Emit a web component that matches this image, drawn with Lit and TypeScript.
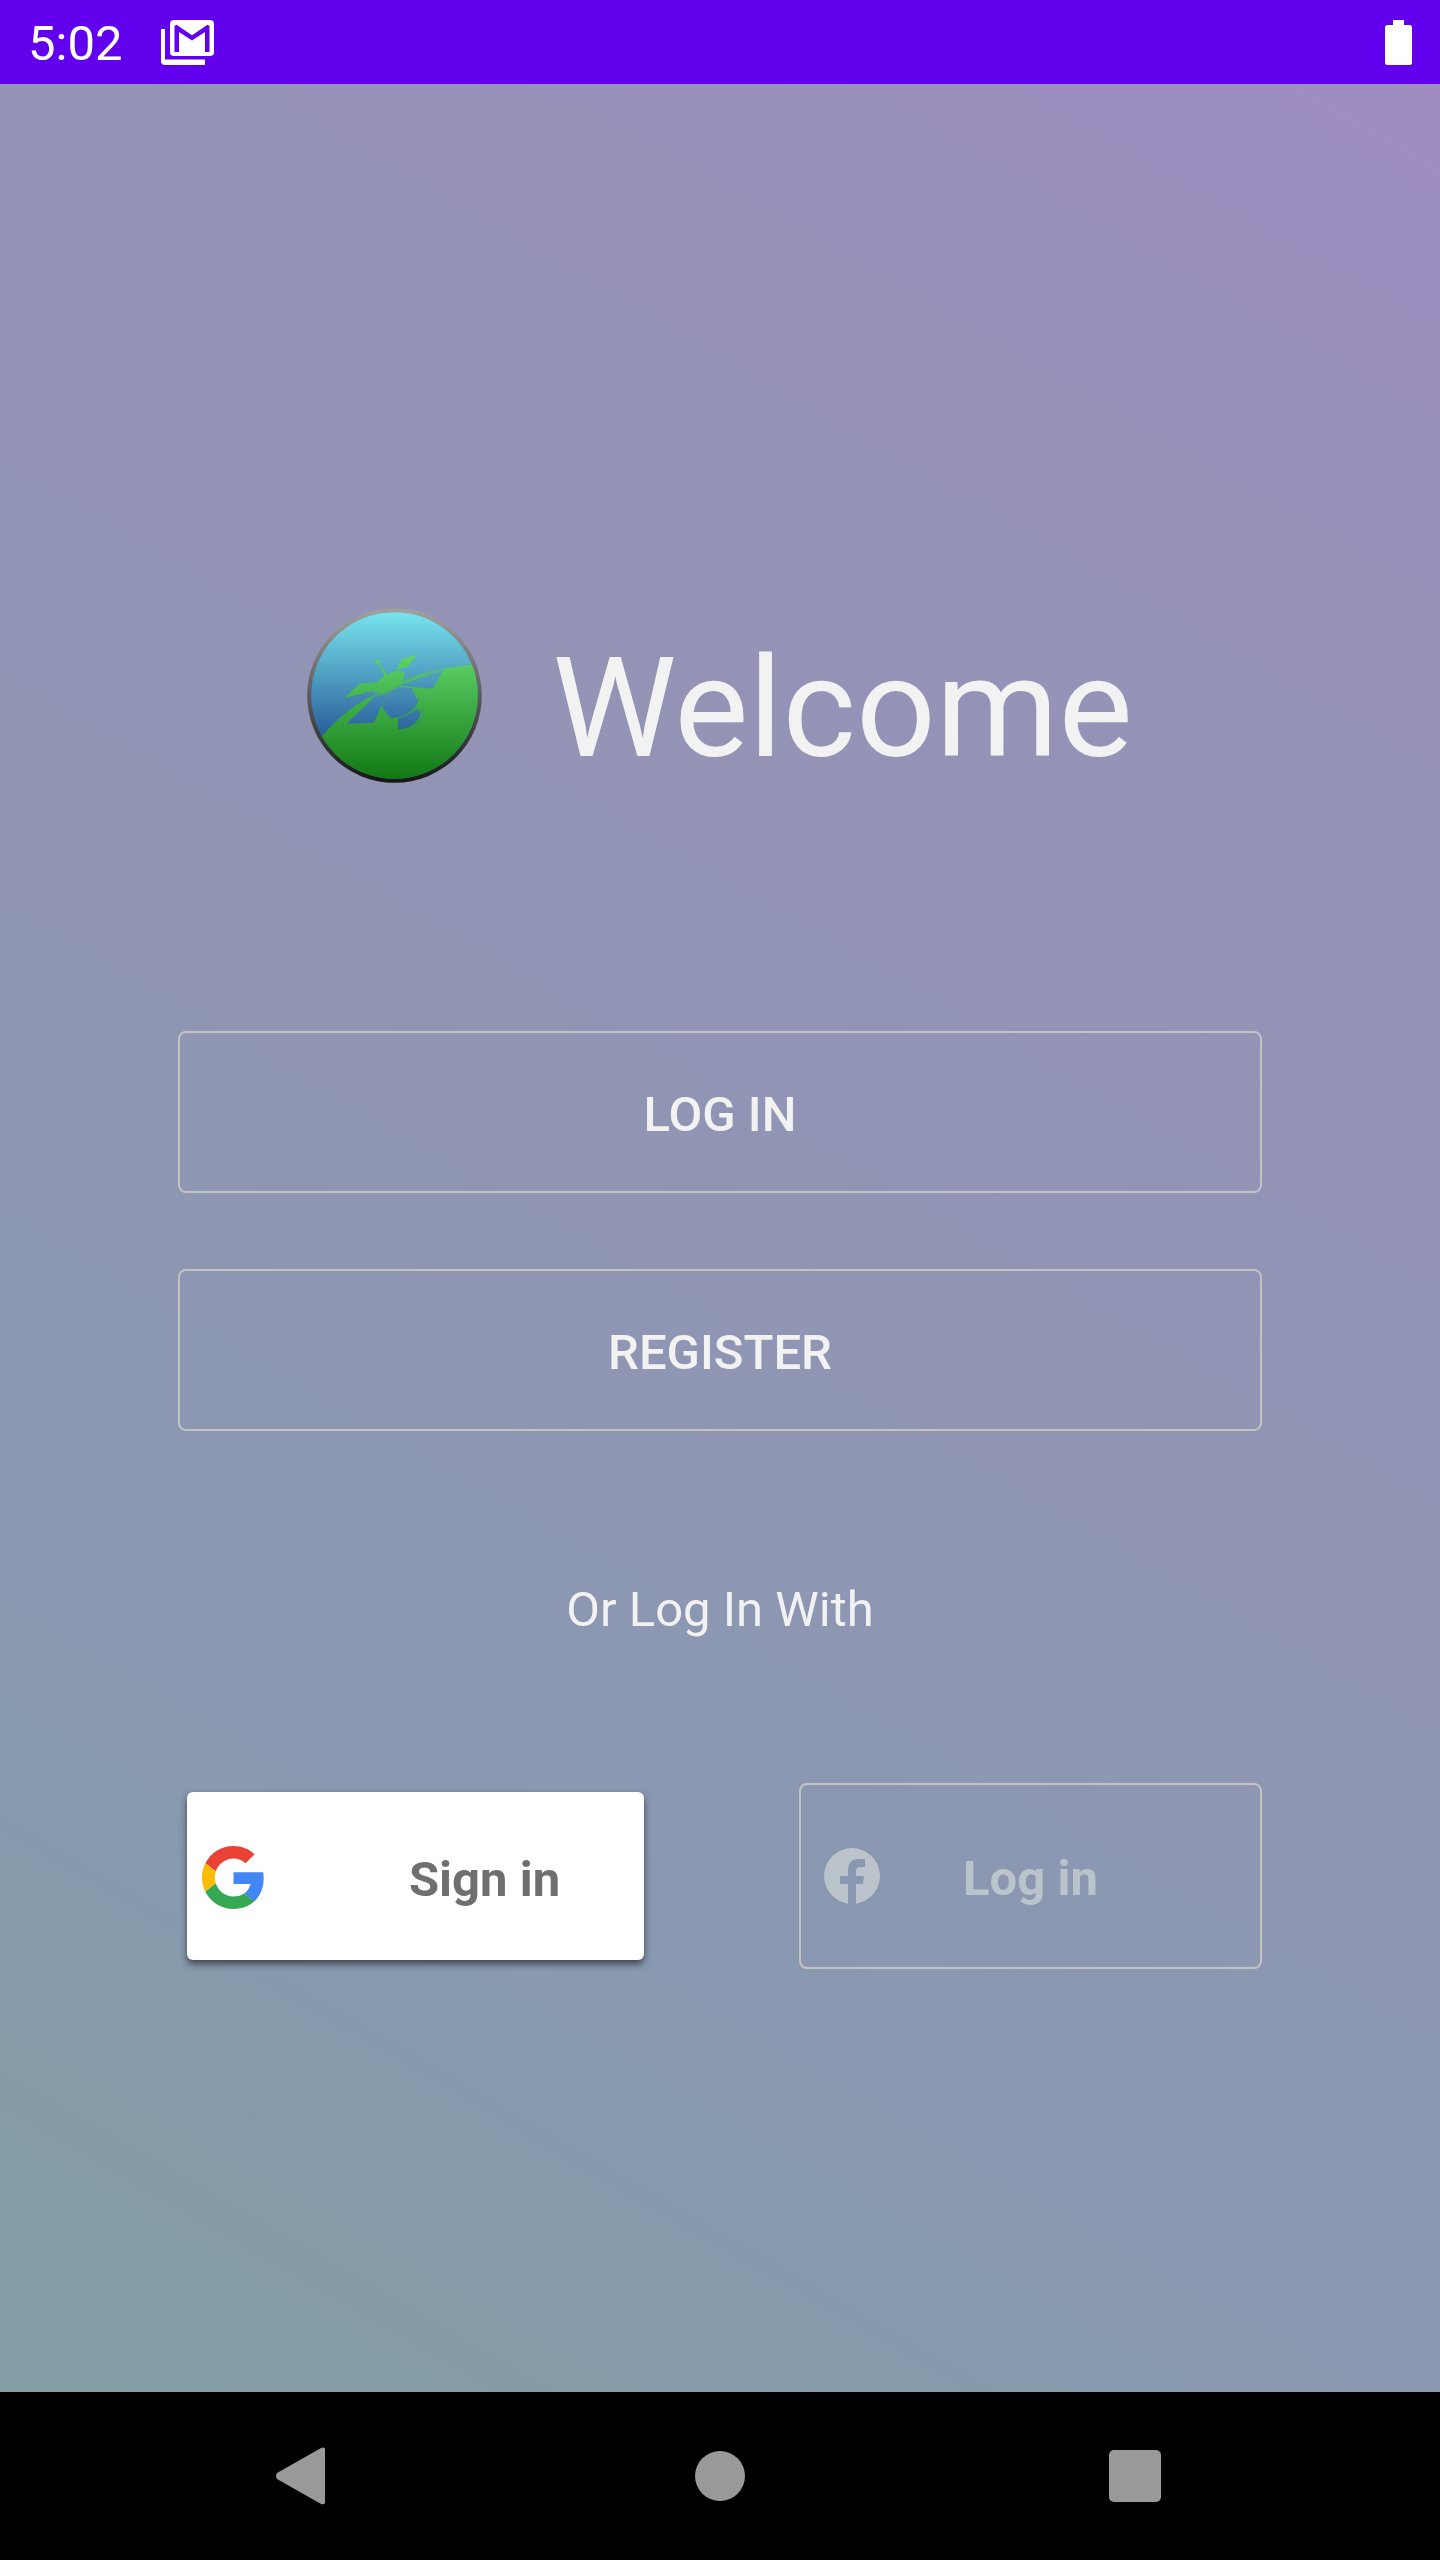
import { LitElement, html, css, svg } from "lit";
import { customElement } from "lit/decorators.js";

const mailIcon = html`<svg class="mail" viewBox="0 0 53 45" role="img" aria-label="New mail">
  <path fill="#fff" d="M0 9H4V39.500H44V45H4Q0 45 0 41Z" />
  <path fill="#fff" fill-rule="evenodd" d="M13 0H49Q53 0 53 4V32Q53 36 49 36H13Q9 36 9 32V4Q9 0 13 0ZM13.500 6V32H18V12L31 20.500L44 12V32H48.500V6L46.500 4.700L31 15.200L15.500 4.700Z" />
</svg>`;

const batteryIcon = html`<svg class="battery" viewBox="0 0 27 45" role="img" aria-label="Battery full">
  <path fill="#fff" d="M8 0H19V5H24.500Q27 5 27 7.500V42.500Q27 45 24.500 45H2.500Q0 45 0 42.500V7.500Q0 5 2.500 5H8Z" />
</svg>`;

const beeLogo = html`<svg class="logo" viewBox="51 39 525 525" role="img" aria-label="Bee logo">
  <defs>
    <linearGradient id="rim" x1="0" y1="39" x2="0" y2="564" gradientUnits="userSpaceOnUse">
      <stop offset="0" stop-color="#a2a2a2" />
      <stop offset="1" stop-color="#161616" />
    </linearGradient>
    <linearGradient id="sky" x1="0" y1="50" x2="0" y2="425" gradientUnits="userSpaceOnUse">
      <stop offset="0" stop-color="#78e4ee" />
      <stop offset="1" stop-color="#295c98" />
    </linearGradient>
    <linearGradient id="grass" x1="0" y1="178" x2="0" y2="552" gradientUnits="userSpaceOnUse">
      <stop offset="0" stop-color="#5fd46a" />
      <stop offset="1" stop-color="#127814" />
    </linearGradient>
    <clipPath id="disc"><circle cx="313.500" cy="301.500" r="250" /></clipPath>
  </defs>
  <circle cx="313.500" cy="301.500" r="262" fill="url(#rim)" />
  <g clip-path="url(#disc)">
    <rect x="51" y="39" width="525" height="525" fill="url(#sky)" />
    <path fill="url(#grass)" d="M51 466L96 424C150 362 205 320 258 298L345 254C410 228 480 214 576 206V564H51Z" />
    <g fill="url(#grass)">
      <path d="M163 309L208 266L256 261L246 288Z" />
      <path d="M317 225L337 191L384 178L352 217Z" />
      <path d="M289 252L266 207Q254 205 254 198Q255 192 263 193Q271 197 270 206L298 249Z" />
      <path d="M248 292Q244 266 284 242Q325 220 341 231Q352 250 318 277Q274 297 248 292Z" />
    </g>
    <g fill="url(#sky)">
      <path d="M169 386L253 306L292 296L251 383Z" />
      <path d="M327 272L460 224L428 281Z" />
      <path d="M294 294L328 275L366 280L384 318Q383 330 366 345Q340 370 301 369Q289 357 277 335Z" />
      <path d="M324 370Q348 366 374 346Q388 344 392 353Q390 371 367 390Q346 403 324 402Z" />
    </g>
    <g fill="none" stroke="url(#sky)" stroke-width="2.500" stroke-dasharray="5 2">
      <path d="M254 300Q302 298 344 258L462 222" />
      <path d="M329 231Q348 224 351 240Q353 253 335 270" />
      <path d="M366 279Q384 295 387 317" />
      <path d="M376 342Q399 341 401 356Q397 376 373 389" />
      <path d="M246 292L250 306L292 291L276 333" />
    </g>
    <path d="M368 279Q378 293 381 309" fill="none" stroke="url(#grass)" stroke-width="4" />
  </g>
</svg>`;

const googleIcon = html`<svg class="google-mark" viewBox="0 0 48 48" aria-hidden="true">
  <path fill="#EA4335" d="M24 9.500c3.540 0 6.710 1.220 9.210 3.600l6.850-6.850C35.900 2.380 30.470 0 24 0 14.620 0 6.510 5.380 2.560 13.220l7.980 6.190C12.430 13.720 17.740 9.500 24 9.500z" />
  <path fill="#4285F4" d="M46.980 24.550c0-1.570-.15-3.090-.38-4.550H24v9.020h12.940c-.58 2.960-2.260 5.480-4.780 7.180l7.730 6c4.510-4.180 7.090-10.360 7.090-17.650z" />
  <path fill="#FBBC05" d="M10.530 28.590c-.48-1.450-.76-2.990-.76-4.590s.27-3.140.76-4.590l-7.980-6.190C.92 16.460 0 20.120 0 24c0 3.880.92 7.540 2.560 10.780l7.970-6.190z" />
  <path fill="#34A853" d="M24 48c6.480 0 11.930-2.130 15.890-5.810l-7.730-6c-2.150 1.450-4.920 2.300-8.160 2.300-6.260 0-11.570-4.220-13.470-9.910l-7.980 6.190C6.510 42.620 14.620 48 24 48z" />
</svg>`;

const facebookIcon = html`<svg class="facebook-mark" viewBox="0 0 56 56" aria-hidden="true">
  <path fill="currentColor" d="M28 0A28 28 0 0 1 32 55.700V36H39L40 28H32V23Q32 19 36 19H41V11H35Q24 11 24 22V28H16V36H24V55.700A28 28 0 0 1 28 0Z" />
</svg>`;

const navShapes = [
  { label: "Back", shape: svg`<path d="M69 21.500V76Q68 78 65 77L21 52Q19 49 21 46L65 21Q68 20 69 21.500Z" />` },
  { label: "Home", shape: svg`<circle cx="49" cy="49" r="25" />` },
  { label: "Overview", shape: svg`<rect x="23" y="23" width="52" height="52" rx="5" />` },
];

@customElement("app-root")
export class AppRoot extends LitElement {
  static styles = css`
    :host {
      display: flex;
      flex-direction: column;
      min-height: 100vh;
      font-family: Roboto, "Liberation Sans", sans-serif;
      font-size: 49px;
      line-height: 58px;
      color: #f2f2f2;
    }
    svg {
      display: block;
      flex: none;
    }
    .status {
      display: flex;
      align-items: center;
      gap: 39px;
      height: 84px;
      padding: 0 28px;
      background: #6200ee;
      color: #fff;
    }
    .time {
      padding-top: 4px;
    }
    .mail {
      width: 53px;
      height: 45px;
    }
    .battery {
      width: 27px;
      height: 45px;
      margin-left: auto;
    }
    .screen {
      flex: 1;
      display: flex;
      flex-direction: column;
      padding: 524px 178px 120px;
      background: linear-gradient(
        30deg,
        #839ea5 0%,
        #859ca8 10%,
        #8899b0 23%,
        #9195b4 53%,
        #9692b9 80%,
        #9f8dc2 100%
      );
    }
    .hero {
      display: flex;
      justify-content: center;
      align-items: flex-start;
      gap: 70px;
    }
    .logo {
      width: 175px;
      height: 175px;
    }
    .title {
      margin: 18px 0 0;
      font-size: 140px;
      line-height: 164px;
      font-weight: 400;
    }
    .actions {
      display: flex;
      flex-direction: column;
      gap: 76px;
      margin-top: 241px;
    }
    button {
      box-sizing: border-box;
      margin: 0;
      padding: 0;
      border: 0;
      background: none;
      color: inherit;
      font: inherit;
      cursor: pointer;
    }
    .outlined {
      height: 162px;
      border: 2px solid #c4c3c2;
      border-radius: 8px;
      font-weight: 500;
    }
    .label {
      display: block;
      padding-top: 6px;
      text-align: center;
    }
    .hint {
      margin: 150px 0 144px;
      text-align: center;
    }
    .social {
      display: grid;
      grid-template-columns: 457fr 463fr;
      gap: 155px;
      align-items: center;
      padding-left: 9px;
    }
    .google,
    .facebook {
      display: grid;
      align-items: center;
      font-weight: 700;
    }
    .google {
      grid-template-columns: 63px 1fr;
      column-gap: 60px;
      height: 168px;
      padding: 2px 0 0 15px;
      border-radius: 6px;
      background: #fff;
      color: #6f6f6f;
      box-shadow: 0 4px 7px rgba(0, 0, 0, 0.55);
    }
    .google-mark {
      width: 63px;
      height: 63px;
    }
    .facebook {
      grid-template-columns: 56px 1fr 56px;
      height: 186px;
      padding: 0 23px;
      border: 2px solid #c4c3c2;
      border-radius: 8px;
      color: #bcc4cb;
    }
    .facebook-mark {
      width: 56px;
      height: 56px;
    }
    .nav {
      display: flex;
      justify-content: center;
      align-items: center;
      gap: 317px;
      height: 168px;
      background: #000;
    }
    .nav-icon {
      width: 98px;
      height: 98px;
      fill: #999;
    }
  `;

  render() {
    return html`
      <header class="status">
        <span class="time">5:02</span>
        ${mailIcon} ${batteryIcon}
      </header>
      <main class="screen">
        <div class="hero">
          ${beeLogo}
          <h1 class="title">Welcome</h1>
        </div>
        <div class="actions">
          <button class="outlined" type="button"><span class="label">LOG IN</span></button>
          <button class="outlined" type="button"><span class="label">REGISTER</span></button>
        </div>
        <p class="hint">Or Log In With</p>
        <div class="social">
          <button class="google" type="button">${googleIcon}<span class="label">Sign in</span></button>
          <button class="facebook" type="button">${facebookIcon}<span class="label">Log in</span></button>
        </div>
      </main>
      <nav class="nav" aria-label="System navigation">
        ${navShapes.map(
          (item) => html`<button type="button" aria-label=${item.label}>
            <svg class="nav-icon" viewBox="0 0 98 98" aria-hidden="true">${item.shape}</svg>
          </button>`,
        )}
      </nav>
    `;
  }
}
